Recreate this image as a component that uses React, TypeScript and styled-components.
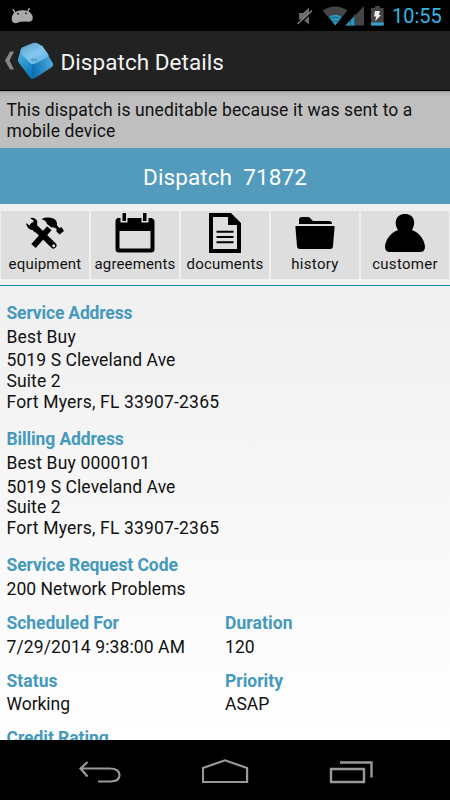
import React from 'react';
import styled, { createGlobalStyle } from 'styled-components';

const Global = createGlobalStyle`
  * { box-sizing: border-box; }
  html, body { margin: 0; padding: 0; background: #000; }
  body { font-family: Roboto, "Noto Sans", sans-serif; overflow: hidden; }
  svg { display: block; flex: none; }
`;

const Screen = styled.div`
  width: 450px;
  height: 800px;
  display: flex;
  flex-direction: column;
  overflow: hidden;
  background: #000;
`;

const StatusBar = styled.header`
  height: 31px;
  flex: none;
  display: flex;
  align-items: center;
  justify-content: space-between;
  padding: 0 8px 0 11px;
`;

const StatusIcons = styled.div`
  display: flex;
  align-items: center;
`;

const Clock = styled.span`
  width: 50px;
  margin-left: 9px;
  padding-top: 2px;
  font-size: 20px;
  line-height: 31px;
  color: #33b5e5;
  white-space: nowrap;
`;

const ActionBar = styled.div`
  height: 60px;
  flex: none;
  display: flex;
  align-items: center;
  padding-left: 5px;
  background: #222;
  border-bottom: 1px solid #000;
`;

const LogoSlot = styled.div`
  margin-left: 3px;
`;

const Title = styled.h1`
  margin: 3px 0 0 6.5px;
  font-size: 22.5px;
  line-height: 28px;
  font-weight: 400;
  color: #f3f3f3;
  letter-spacing: 0.05px;
`;

const Notice = styled.div`
  height: 57px;
  flex: none;
  padding: 9px 6.5px 0;
  font-size: 17.5px;
  line-height: 20.7px;
  letter-spacing: 0.11px;
  color: #111;
  background: linear-gradient(#999 0, #b5b5b5 2px, #bfbfbf 6px);
`;

const Banner = styled.div`
  height: 56px;
  flex: none;
  padding-top: 1px;
  text-align: center;
  font-size: 22.5px;
  line-height: 56px;
  letter-spacing: 0.08px;
  color: #fff;
  white-space: pre;
  background: #529bbd;
`;

const Toolbar = styled.nav`
  height: 82px;
  flex: none;
  display: grid;
  grid-template-columns: repeat(5, 88px);
  column-gap: 2px;
  padding: 6.5px 1px 6.5px;
  background: #f0f0f0;
  border-bottom: 1px solid #1787a9;
`;

const Tile = styled.button`
  height: 68px;
  padding: 2.5px 0 0;
  border: 0;
  display: flex;
  flex-direction: column;
  align-items: center;
  background: #dedede;
  color: #111;
  font-family: inherit;
`;

const TileLabel = styled.span<{ $spacing: number }>`
  margin-top: 1px;
  font-size: 15px;
  line-height: 20px;
  letter-spacing: ${(p) => p.$spacing}px;
  white-space: nowrap;
`;

const Details = styled.main`
  flex: 1;
  min-height: 0;
  overflow: hidden;
  padding: 16.8px 6.5px 0;
  background: linear-gradient(#f0f0f0, #fff);
`;

const Field = styled.section<{ $gap: number }>`
  display: flex;
  flex-direction: column;
  margin-bottom: ${(p) => p.$gap}px;
`;

const Row = styled.div`
  display: grid;
  grid-template-columns: 218.5px 1fr;
`;

const FieldName = styled.h2<{ $spacing: number }>`
  margin: 0 0 3.1px;
  font-size: 17.5px;
  line-height: 20.7px;
  font-weight: 700;
  color: #4599bd;
  white-space: nowrap;
  letter-spacing: ${(p) => p.$spacing}px;
`;

const Value = styled.p`
  margin: 0 0 3.1px;
  font-size: 17.5px;
  line-height: 20.7px;
  color: #111;
`;

const Line = styled.span<{ $spacing: number }>`
  display: block;
  white-space: nowrap;
  letter-spacing: ${(p) => p.$spacing}px;
`;

const NavBar = styled.footer`
  height: 60px;
  flex: none;
  background: #000;
  display: flex;
  justify-content: space-between;
  padding: 11px 76px 0 76px;
`;

const Android = () => (
  <svg width="23" height="17" viewBox="0 0 23 17">
    <path d="M2 2l2 4M18.5 1l-2 4" stroke="#aaa" strokeWidth="1.4" />
    <path fill="#aaa" d="M1 14Q0 9 3 6Q6 3 11 3.2Q17 3 20 6.5Q23 10 21 13.5Q18.5 15.5 15 14.5L9 14.8Q3.5 18 1 14Z" />
    <circle cx="7" cy="6.7" r=".9" fill="#111" />
    <circle cx="15" cy="6.3" r=".9" fill="#111" />
  </svg>
);

const SystemIcons = () => (
  <svg width="88" height="24" viewBox="0 0 88 24" overflow="visible">
    <path fill="#6c6c6c" d="M4 9h4l6-5.500v17l-6-5H4z" />
    <path d="M3 22L17 8" stroke="#000" strokeWidth="1.500" />
    <path d="M2.500 20L17 6.500" stroke="#808080" strokeWidth="1.500" />
    <path fill="#444" d="M27.500 6.500Q40 -1.500 52.500 6.500L40.300 21.500z" />
    <path fill="#2799bf" d="M34 13Q40.300 8.500 46.600 13L40.300 21.500z" />
    <path d="M35 15Q40.300 11.500 45.500 15M37 18Q40.300 15.500 43.500 18" stroke="#10586f" strokeWidth=".8" fill="none" />
    <path fill="#444" d="M69 2v19.500H50.500z" />
    <path fill="#2799bf" d="M60 11.500v10h-9.500z" />
    <path d="M55.500 15v7M59.500 10v12" stroke="#165b72" strokeWidth=".8" />
    <path fill="#444" d="M76 4h4V2h5v2h3.700v17.500H76z" />
    <path fill="#33a5cc" d="M76 18.500h12.700v3H76z" />
    <path fill="#eee" d="M80 7h5l-1.200 4h2.200L80 17.300l1.300-4.800H79z" />
  </svg>
);

const BackChevron = () => (
  <svg width="9" height="19" viewBox="0 0 9 19">
    <path fill="#888" d="M5 .5h4L4.500 9.500 9 18.500H5L0 9.500z" />
  </svg>
);

const KeyLogo = () => (
  <svg width="37" height="38" viewBox="0 0 37 38">
    <defs>
      <linearGradient id="top" x1="0" y1="0" x2=".7" y2="1">
        <stop stopColor="#559fcc" />
        <stop offset=".6" stopColor="#85c6ee" />
        <stop offset="1" stopColor="#5cb2e6" />
      </linearGradient>
      <linearGradient id="left" x1="0" y1="0" x2=".5" y2="1">
        <stop stopColor="#58b5e6" />
        <stop offset="1" stopColor="#0a7abc" />
      </linearGradient>
      <linearGradient id="right" x1="0" y1=".6" x2="1" y2=".3">
        <stop stopColor="#0b6fb0" />
        <stop offset="1" stopColor="#55b0e6" />
      </linearGradient>
    </defs>
    <path fill="url(#left)" d="M4 7L1 17.500Q.5 19.500 2 21L13 35.500Q14.500 37.500 16.500 36.500L17 20z" />
    <path fill="url(#right)" d="M25 3L36 21.500Q36.500 23.500 35 25L17.500 36.500Q14.500 37 14.800 34L15 21z" />
    <path fill="url(#top)" d="M5 5.500L16 1Q19 .2 21 1.500L25 4L31.500 12.500Q32 14 30 15L17.500 21.500Q15 22.500 13.500 21L4.500 11.500Q2.500 7 5 5.500z" />
    <path fill="none" stroke="#8fd0f4" strokeWidth=".5" d="M4 11.500L13.500 21Q15 22.500 17.500 21.500L31 14.500" />
    <path d="M14 17l2 1.500m0-2l1 2m1-1l2 1" stroke="#38698b" strokeWidth=".8" />
  </svg>
);

const Equipment = () => (
  <svg width="40" height="40" viewBox="0 0 40 40">
    <path d="M8 12.500L28.500 32.500" stroke="#000" strokeWidth="6" strokeLinecap="round" />
    <path d="M24.500 15L8.500 33" stroke="#000" strokeWidth="5.800" />
    <path d="M5 5Q10.500 4 12.300 8.500L12 13.500L14 16.500L10 19.500L7.500 17Q2 16.500 1 10L4.500 12.500L8 11L8.500 7.500z" />
    <path d="M16.500 6Q22 3.500 28.500 5.500Q32.500 7.500 32 12.500L34.500 15L36.500 14L39 18L34.500 21.500L31.500 18.500V16Q29 13.500 26.500 14.500L22 11Q21.500 7.500 16.500 6z" />
    <path d="M22 12.800l6.500 5.700" stroke="#dedede" strokeWidth=".8" />
    <circle cx="28.700" cy="32.700" r="1.500" fill="#dedede" />
  </svg>
);

const Agreements = () => (
  <svg width="40" height="40" viewBox="0 0 40 40">
    <path fillRule="evenodd" d="M2.500 5H5.500V9.500H12.500V5H26.500V9.500H33.500V5H36.500Q39.500 6 39.500 8V36Q39.500 39.500 36 39.500H4Q.5 39.500 .5 36V8Q.5 6 2.500 5ZM4.500 18V35.500H35.500V18Z" />
    <path d="M7.500 0h3.500v8H7.500zM28 0h3.500v8H28z" />
  </svg>
);

const Documents = () => (
  <svg width="40" height="40" viewBox="0 0 40 40">
    <path fillRule="evenodd" d="M4 0H26L36 10V40H4ZM8 4V36H32V12H23V4Z" />
    <path d="M11.500 18.700h17M11.500 24h17M11.500 29.300h17" stroke="#000" strokeWidth="2" />
  </svg>
);

const History = () => (
  <svg width="40" height="40" viewBox="0 0 40 40">
    <path d="M4 7Q4 4 7 4H13Q15 4 16 6L18 8H34Q37 8 37 11H4Z" />
    <path d="M1 13H39Q40 13 39.500 15L38 33Q38 36 35 36H5Q2 36 2 33L.5 15Q0 13 1 13Z" />
  </svg>
);

const Customer = () => (
  <svg width="40" height="40" viewBox="0 0 40 40">
    <path d="M20 1C30 1 31 11 27 17C36 20 40 29 40 34Q40 39 35 39H5Q0 39 0 34C0 29 4 20 13 17C9 11 10 1 20 1Z" />
  </svg>
);

const BackNav = () => (
  <svg width="45" height="34" viewBox="0 0 45 34" fill="none" stroke="#999" strokeWidth="2.200">
    <path d="M11.500 11L4.500 17.500l7 8M4.500 17.500h29c6 0 10 2 10 6.800s-4 6.200-9 6.200H22" />
  </svg>
);

const HomeNav = () => (
  <svg width="47" height="34" viewBox="0 0 47 34" fill="none" stroke="#999" strokeWidth="2.200">
    <path d="M.9 17L23 9.300l22.100 7.700v14H.9z" />
  </svg>
);

const RecentNav = () => (
  <svg width="45" height="34" viewBox="0 0 45 34" fill="none" stroke="#999" strokeWidth="2.400">
    <path d="M2 18h33v13H2zM11 11.500h31.500v15" />
  </svg>
);

const tiles = [
  { label: 'equipment', Icon: Equipment, spacing: 0.2 },
  { label: 'agreements', Icon: Agreements, spacing: 0.15 },
  { label: 'documents', Icon: Documents, spacing: 0.2 },
  { label: 'history', Icon: History, spacing: 0.32 },
  { label: 'customer', Icon: Customer, spacing: 0.28 },
];

type TextLine = { text: string; spacing: number };

const address: TextLine[] = [
  { text: '5019 S Cleveland Ave', spacing: 0.09 },
  { text: 'Suite 2', spacing: 0.1 },
  { text: 'Fort Myers, FL 33907-2365', spacing: 0.18 },
];

type EntryProps = { name: string; nameSpacing: number; values?: TextLine[][]; gap?: number };

const Entry = ({ name, nameSpacing, values = [], gap = 10 }: EntryProps) => (
  <Field $gap={gap}>
    <FieldName $spacing={nameSpacing}>{name}</FieldName>
    {values.map((lines) => (
      <Value key={lines[0].text}>
        {lines.map(({ text, spacing }) => (
          <Line key={text} $spacing={spacing}>{text}</Line>
        ))}
      </Value>
    ))}
  </Field>
);

export default function App() {
  return (
    <>
      <Global />
      <Screen>
        <StatusBar>
          <Android />
          <StatusIcons>
            <SystemIcons />
            <Clock>10:55</Clock>
          </StatusIcons>
        </StatusBar>
        <ActionBar>
          <BackChevron />
          <LogoSlot>
            <KeyLogo />
          </LogoSlot>
          <Title>Dispatch Details</Title>
        </ActionBar>
        <Notice>This dispatch is uneditable because it was sent to a mobile device</Notice>
        <Banner>{'Dispatch  71872'}</Banner>
        <Toolbar>
          {tiles.map(({ label, Icon, spacing }) => (
            <Tile key={label}>
              <Icon />
              <TileLabel $spacing={spacing}>{label}</TileLabel>
            </Tile>
          ))}
        </Toolbar>
        <Details>
          <Entry name="Service Address" nameSpacing={-0.17} values={[[{ text: 'Best Buy', spacing: 0.15 }], address]} gap={13.5} />
          <Entry name="Billing Address" nameSpacing={-0.12} values={[[{ text: 'Best Buy 0000101', spacing: 0.16 }], address]} gap={13.5} />
          <Entry name="Service Request Code" nameSpacing={-0.08} values={[[{ text: '200 Network Problems', spacing: 0.05 }]]} />
          <Row>
            <Entry name="Scheduled For" nameSpacing={-0.03} values={[[{ text: '7/29/2014 9:38:00 AM', spacing: 0.11 }]]} />
            <Entry name="Duration" nameSpacing={0.1} values={[[{ text: '120', spacing: 0.1 }]]} />
          </Row>
          <Row>
            <Entry name="Status" nameSpacing={0.05} values={[[{ text: 'Working', spacing: -0.05 }]]} />
            <Entry name="Priority" nameSpacing={0} values={[[{ text: 'ASAP', spacing: 0 }]]} />
          </Row>
          <Entry name="Credit Rating" nameSpacing={-0.05} />
        </Details>
        <NavBar>
          <BackNav />
          <HomeNav />
          <RecentNav />
        </NavBar>
      </Screen>
    </>
  );
}
